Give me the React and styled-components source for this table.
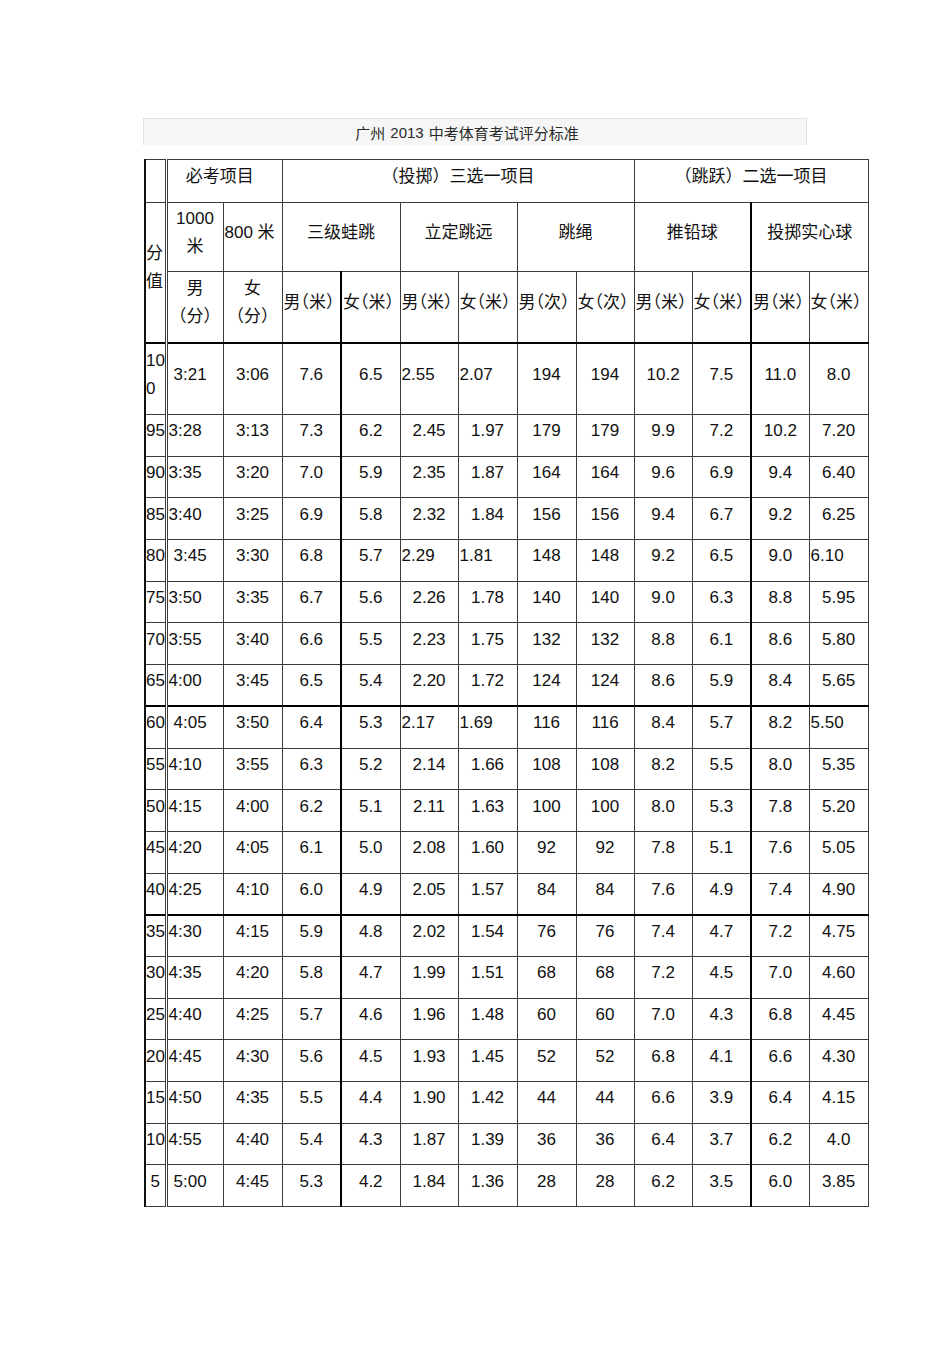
import styled, { createGlobalStyle } from 'styled-components';

const GlobalStyle = createGlobalStyle`
    body {
        margin: 0;
        background: #ffffff;
        font-family: "Liberation Sans", "Noto Sans CJK SC", sans-serif;
        color: #111111;
    }
`;

const widths = [21, 57, 59, 59, 59, 58, 59, 59, 58, 58, 59, 58, 59];

// align: 'c' centered, 'l' left aligned, 'i' left aligned with small indent
const rows = [
    ['100', ['3:21', 'i'], '3:06', '7.6', '6.5', ['2.55', 'l'], ['2.07', 'l'], '194', '194', '10.2', '7.5', '11.0', '8.0'],
    ['95', ['3:28', 'l'], '3:13', '7.3', '6.2', '2.45', '1.97', '179', '179', '9.9', '7.2', '10.2', '7.20'],
    ['90', ['3:35', 'l'], '3:20', '7.0', '5.9', '2.35', '1.87', '164', '164', '9.6', '6.9', '9.4', '6.40'],
    ['85', ['3:40', 'l'], '3:25', '6.9', '5.8', '2.32', '1.84', '156', '156', '9.4', '6.7', '9.2', '6.25'],
    ['80', ['3:45', 'i'], '3:30', '6.8', '5.7', ['2.29', 'l'], ['1.81', 'l'], '148', '148', '9.2', '6.5', '9.0', ['6.10', 'l']],
    ['75', ['3:50', 'l'], '3:35', '6.7', '5.6', '2.26', '1.78', '140', '140', '9.0', '6.3', '8.8', '5.95'],
    ['70', ['3:55', 'l'], '3:40', '6.6', '5.5', '2.23', '1.75', '132', '132', '8.8', '6.1', '8.6', '5.80'],
    ['65', ['4:00', 'l'], '3:45', '6.5', '5.4', '2.20', '1.72', '124', '124', '8.6', '5.9', '8.4', '5.65'],
    ['60', ['4:05', 'i'], '3:50', '6.4', '5.3', ['2.17', 'l'], ['1.69', 'l'], '116', '116', '8.4', '5.7', '8.2', ['5.50', 'l']],
    ['55', ['4:10', 'l'], '3:55', '6.3', '5.2', '2.14', '1.66', '108', '108', '8.2', '5.5', '8.0', '5.35'],
    ['50', ['4:15', 'l'], '4:00', '6.2', '5.1', '2.11', '1.63', '100', '100', '8.0', '5.3', '7.8', '5.20'],
    ['45', ['4:20', 'l'], '4:05', '6.1', '5.0', '2.08', '1.60', '92', '92', '7.8', '5.1', '7.6', '5.05'],
    ['40', ['4:25', 'l'], '4:10', '6.0', '4.9', '2.05', '1.57', '84', '84', '7.6', '4.9', '7.4', '4.90'],
    ['35', ['4:30', 'l'], '4:15', '5.9', '4.8', '2.02', '1.54', '76', '76', '7.4', '4.7', '7.2', '4.75'],
    ['30', ['4:35', 'l'], '4:20', '5.8', '4.7', '1.99', '1.51', '68', '68', '7.2', '4.5', '7.0', '4.60'],
    ['25', ['4:40', 'l'], '4:25', '5.7', '4.6', '1.96', '1.48', '60', '60', '7.0', '4.3', '6.8', '4.45'],
    ['20', ['4:45', 'l'], '4:30', '5.6', '4.5', '1.93', '1.45', '52', '52', '6.8', '4.1', '6.6', '4.30'],
    ['15', ['4:50', 'l'], '4:35', '5.5', '4.4', '1.90', '1.42', '44', '44', '6.6', '3.9', '6.4', '4.15'],
    ['10', ['4:55', 'l'], '4:40', '5.4', '4.3', '1.87', '1.39', '36', '36', '6.4', '3.7', '6.2', '4.0'],
    [['5', 'c'], ['5:00', 'i'], '4:45', '5.3', '4.2', '1.84', '1.36', '28', '28', '6.2', '3.5', '6.0', '3.85'],
];

const thickRows = ['100', '60', '35'];

const units = ['米', '米', '米', '米', '次', '次', '米', '米', '米', '米'];

function App() {
    return (
        <Page>
            <GlobalStyle />
            <TitleBar>广州<Year>2013</Year>中考体育考试评分标准</TitleBar>
            <ScoreTable>
                <colgroup>
                    {widths.map((w, i) => <col key={i} style={{ width: w }} />)}
                </colgroup>
                <tbody>
                    <tr>
                        <Cell $h={43} $double></Cell>
                        <Cell colSpan={2}>必考项目&nbsp;&nbsp;</Cell>
                        <Cell colSpan={6}>（投掷）三选一项目</Cell>
                        <Cell colSpan={4}>（跳跃）二选一项目</Cell>
                    </tr>
                    <tr>
                        <Cell rowSpan={2} $align="s" $double $lines>分<br />值</Cell>
                        <Cell $h={69} $lines>1000<br />米</Cell>
                        <Cell $align="l">800 米</Cell>
                        <Cell colSpan={2}>三级蛙跳</Cell>
                        <Cell colSpan={2}>立定跳远</Cell>
                        <Cell colSpan={2}>跳绳</Cell>
                        <Cell colSpan={2}>推铅球</Cell>
                        <Cell colSpan={2} $thickLeft>投掷实心球</Cell>
                    </tr>
                    <tr>
                        <Cell $h={71} $lines><Label>男<br />（分）</Label></Cell>
                        <Cell $lines><Label>女<br />（分）</Label></Cell>
                        {units.map((u, i) => (
                            <Cell key={i} $align="l" $thickLeft={i === 1 || i === 8}>
                                <Label>{i % 2 === 0 ? '男' : '女'}（{u}）</Label>
                            </Cell>
                        ))}
                    </tr>
                    {rows.map((row) => {
                        const score = Array.isArray(row[0]) ? row[0][0] : row[0];
                        return (
                            <tr key={score}>
                                {row.map((v, i) => {
                                    const [text, align] = Array.isArray(v) ? v : [v, i === 0 ? 's' : 'c'];
                                    const first = i === 0;
                                    return (
                                        <Cell
                                            key={i}
                                            $h={score === '100' ? 72 : 41.7}
                                            $align={align}
                                            $double={first}
                                            $lines={first && score === '100'}
                                            $thickTop={thickRows.includes(score)}
                                            $thickLeft={i === 4 || i === 11}
                                        >
                                            {first && text === '100' ? <>10<br />0</> : text}
                                        </Cell>
                                    );
                                })}
                            </tr>
                        );
                    })}
                </tbody>
            </ScoreTable>
        </Page>
    );
}

const Page = styled.div`
    padding: 118px 0 120px 143px;
`;

const TitleBar = styled.div`
    box-sizing: border-box;
    width: 664px;
    height: 27px;
    background: #f6f6f6;
    border: 1px solid #e2e2e2;
    border-bottom: none;
    display: flex;
    align-items: center;
    justify-content: center;
    padding-right: 16px;
    font-size: 15px;
    color: #2a2a2a;
    margin-bottom: 14px;
`;

const Year = styled.span`
    margin: 0 5px;
`;

const ScoreTable = styled.table`
    border-collapse: collapse;
    table-layout: fixed;
    width: 724px;
    margin-left: 1px;
`;

const Label = styled.span`
    font-feature-settings: "halt";
`;

const pads = { i: '6px', l: '1px', s: '0', c: '0' };

const Cell = styled.td`
    border: 1px solid #3c3c3c;
    border-top: ${(p) => (p.$thickTop ? '2px solid #000000' : '1px solid #3c3c3c')};
    border-left: ${(p) => (p.$thickLeft ? '2px solid #000000' : '1px solid #3c3c3c')};
    ${(p) => p.$double && 'border-right: 3px double #3c3c3c; border-left: 2px solid #111111;'}
    height: ${(p) => (p.$h ? `${p.$h}px` : 'auto')};
    padding: 0 0 8px ${(p) => pads[p.$align] || '0'};
    text-align: ${(p) => (p.$align === 'c' || !p.$align ? 'center' : 'left')};
    vertical-align: middle;
    font-size: 17px;
    line-height: ${(p) => (p.$lines ? '28px' : '20px')};
    white-space: nowrap;
    overflow: visible;
    box-sizing: border-box;
`;

export default App;
